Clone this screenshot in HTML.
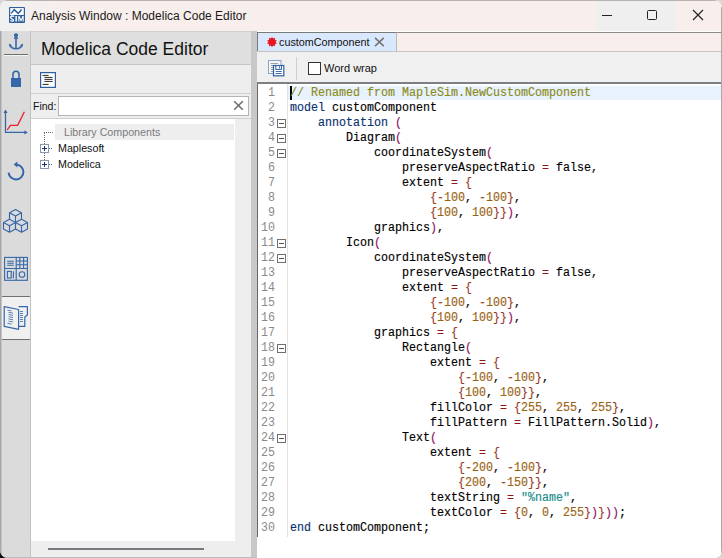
<!DOCTYPE html>
<html><head><meta charset="utf-8">
<style>
*{margin:0;padding:0;box-sizing:border-box}
html,body{width:722px;height:558px;overflow:hidden;background:#d8d8d8}
body{position:relative;font-family:"Liberation Sans",sans-serif;font-size:12px;color:#000}
.a{position:absolute}
#win{left:0;top:0;width:722px;height:558px;background:linear-gradient(90deg,#f0f0f0 0,#f8efed 70px);border-radius:7px 8px 8px 8px;overflow:hidden}
#title{left:31px;top:9px;font-size:12px;color:#1a1a1a;white-space:nowrap}
#strip{left:0;top:31px;width:31px;height:526px;background:linear-gradient(90deg,#a6a6a6 0,#a6a6a6 1px,#c4c4c4 1px,#c4c4c4 2px,#dbdbdb 2px);border-right:1px solid #c2c2c2}
#lp{left:31px;top:31px;width:220px;height:526px;background:#eeeeee}
#lphead{left:0;top:0;width:220px;height:34px;background:#dfdfdf;border-top:1px solid #d0d0d0;border-bottom:1px solid #c6c6c6}
#lphead span{position:absolute;left:10px;top:7px;font-size:17.5px;color:#111;white-space:nowrap}
#lptool{left:0;top:34px;width:220px;height:29px;background:#eeeeee;border-bottom:1px solid #cfcfcf}
#find{left:0;top:63px;width:220px;height:25px;background:#eeeeee;border-bottom:1px solid #cfcfcf}
#tree{left:0;top:88px;width:204px;height:422px;background:#fff}
#split{left:251px;top:31px;width:6px;height:526px;background:#c8c8c8}
#rp{left:257px;top:31px;width:464px;height:527px;background:#fff}
#tabstrip{left:0;top:0;width:464px;height:21px;background:#f8efed;border-top:1px solid #fff;border-bottom:1px solid #c4c4c4}
#tabtopline{left:0;top:1px;width:464px;height:1px;background:#8a8a8a}
#tab{left:0;top:1px;width:140px;height:19px;background:#d9e8fc;border:1px solid #7a7a7a;border-right-color:#b8b8b8;border-bottom:none}
#rtool{left:0;top:21px;width:464px;height:32px;background:#f0f0f0;border-bottom:2px solid #7c7f84}
#code{left:0;top:53px;width:464px;height:473px;background:#fff}
#lines{left:0;top:2px;width:464px;height:452px}
.ln{position:absolute;left:0;width:18px;text-align:right;font-family:"Liberation Mono",monospace;font-size:11.67px;line-height:15px;color:#8a8a8a;transform:scaleY(1.04);transform-origin:0 10px}
.cl{position:absolute;left:33px;font-family:"Liberation Mono",monospace;font-size:12.0px;line-height:15px;white-space:pre;color:#000;-webkit-text-stroke:0.15px currentColor;transform:scaleX(0.97191);transform-origin:0 10px}
.k{color:#08326e}
.c{color:#8b8a1a}
.p{color:#8e1262}
.b{color:#9a3a28}
.m{color:#a04828}
.e{color:#901818}
.n{color:#9a6414}
.s{color:#188a8a}
.fold{position:absolute;left:20px;width:9px;height:9px;border:1px solid #707070;background:#fff}
.fold:after{content:"";position:absolute;left:1px;top:3px;width:5px;height:1px;background:#505050}
.ic{position:absolute}
</style></head><body>
<div class="a" style="left:0;top:540px;width:14px;height:18px;background:#111"></div>
<div id="win" class="a">
  <div class="a" style="left:0;top:0;width:722px;height:1px;background:#b8b2b0"></div>
  <svg class="a" style="left:9px;top:7px" width="16" height="16" viewBox="0 0 16 16">
    <rect x="0" y="0" width="16" height="16" rx="1" fill="#2d5f9e"/>
    <rect x="1.2" y="1.1" width="13.6" height="6.9" fill="#fff"/>
    <polyline points="2.2,6.4 5.2,2.6 9.2,6.4 12.6,2.6" fill="none" stroke="#2d5f9e" stroke-width="1.5"/>
    <path d="M5 9.6 Q4.4 9 3.2 9 Q1.6 9 1.6 10.5 Q1.6 11.6 3.2 12 Q4.6 12.4 4.6 13.2 Q4.6 14.2 3.2 14.2 Q2 14.2 1.4 13.4" fill="none" stroke="#fff" stroke-width="1.3"/>
    <rect x="6.4" y="9" width="1.5" height="5.6" fill="#fff"/>
    <path d="M9.3 14.6 V9 H10.6 L12 12.6 L13.4 9 H14.7 V14.6 H13.6 V11 L12.4 14.2 H11.6 L10.4 11 V14.6Z" fill="#fff"/>
  </svg>
  <div id="title" class="a">Analysis Window : Modelica Code Editor</div>
  <div class="a" style="left:597px;top:1px;width:79px;height:30px;background:#efefef"></div>
  <div class="a" style="left:602px;top:15px;width:10px;height:1px;background:#222"></div>
  <div class="a" style="left:647px;top:10px;width:10px;height:10px;border:1px solid #222;border-radius:1.5px"></div>
  <svg class="a" style="left:692px;top:9px" width="12" height="12" viewBox="0 0 12 12"><path d="M1 1L11 11M11 1L1 11" stroke="#222" stroke-width="1.2"/></svg>

  <!-- left icon strip -->
  <div id="strip" class="a">
  </div>
  <div class="a" style="left:2px;top:296px;width:28px;height:44px;background:#f0f0f0;border-top:1px solid #707070;border-bottom:1px solid #707070"></div>
  <div class="a" style="left:4px;top:54px;width:24px;height:1px;background:#6e6e6e"></div>
  <div class="a" style="left:4px;top:55px;width:24px;height:1px;background:#f4f4f4"></div>
  <svg class="a" style="left:0;top:31px" width="31" height="310" viewBox="0 31 31 310">
    <!-- anchor -->
    <g fill="none" stroke="#3567a8" stroke-width="1.6">
      <circle cx="16" cy="35.3" r="1.3" fill="#3567a8"/>
      <line x1="16" y1="35" x2="16" y2="48.5"/>
      <line x1="14" y1="38.2" x2="18" y2="38.2"/>
      <path d="M9.6 44.6 Q11 48.8 16 48.8 Q21 48.8 22.4 44.6"/>
    </g>
    <path d="M8.8 43.4 L12 45.2 L9.8 46.8Z M23.2 43.4 L20 45.2 L22.2 46.8Z" fill="#3567a8"/>
    <!-- lock -->
    <path d="M13 78 V74.5 A3 3.2 0 0 1 19 74.5 V78" fill="none" stroke="#3567a8" stroke-width="1.6"/>
    <rect x="11" y="78" width="10" height="9" fill="#3567a8"/>
    <!-- chart -->
    <g fill="none" stroke="#3567a8" stroke-width="1.3">
      <path d="M5.5 111.5 V132.4 H26"/>
    </g>
    <path d="M5.5 109.6 L3.4 113 H7.6Z M27.8 132.4 L24.4 130.3 V134.5Z" fill="#3567a8"/>
    <path d="M7.2 130 L10.4 125.4 H17.6 L24.4 111.8" fill="none" stroke="#e8202a" stroke-width="1.3"/>
    <!-- refresh -->
    <path d="M8.6 172.6 A7.4 7.4 0 1 0 16.2 164.6" fill="none" stroke="#3567a8" stroke-width="2"/>
    <path d="M13.6 164.6 L17.4 161.6 L17.4 167.6Z" fill="#3567a8"/>
    <!-- cubes -->
    <g fill="none" stroke="#3567a8" stroke-width="1.15" stroke-linejoin="round">
      <path d="M15.5 209.5 L21.5 212.7 L15.5 215.9 L9.5 212.7Z M9.5 212.7 V219.3 M15.5 215.9 V222.5 M21.5 212.7 V219.3"/>
      <path d="M9.5 219.3 L15.5 222.5 L9.5 225.7 L3.5 222.5Z M3.5 222.5 V229.1 L9.5 232.3 L15.5 229.1 V222.5 M9.5 225.7 V232.3"/>
      <path d="M21.5 219.3 L27.5 222.5 L21.5 225.7 L15.5 222.5Z M15.5 229.1 L21.5 232.3 L27.5 229.1 V222.5 M21.5 225.7 V232.3"/>
    </g>
    <!-- panel -->
    <g fill="none" stroke="#3567a8" stroke-width="1.1">
      <rect x="4.6" y="257.4" width="22.8" height="22.9"/>
      <path d="M16.2 257.4 V280.3 M4.6 268.5 H27.4"/>
      <path d="M7.2 261.3 H13.8 M7.2 263.3 H13.8 M7.2 265.3 H13.8"/>
      <path d="M19.8 257.4 V268.5 M23.6 257.4 V268.5 M16.2 261 H27.4 M16.2 264.8 H27.4"/>
      <rect x="7.4" y="271.4" width="3.8" height="6.6"/>
      <path d="M13.4 271.2 V278.2"/>
      <circle cx="22" cy="274.5" r="2.8"/>
    </g>
    <!-- doc -->
    <g fill="none" stroke="#3567a8" stroke-width="1.2" stroke-linejoin="round">
      <path d="M18.5 306.6 H27.4 V315 L24.8 317 V326.4 H18.6"/>
      <path d="M4.2 306.6 L18.6 309.5 V329.3 L4.2 326.4Z"/>
    </g>
    <g stroke="#3567a8" stroke-width="0.8">
      <path d="M7.5 310 L11.5 311 M8.5 312.3 L13 313.2 M8.5 314.5 L13 315.4 M8.5 316.7 L13 317.6 M8.5 318.9 L13 319.8 M8.5 321.1 L13 322 M7.5 323.3 L11.5 324.2"/>
      <path d="M20 311.5 H23 M20 313.5 H23 M20 315.5 H23 M20 317.5 H23 M20 319.5 H23 M20 321.5 H23"/>
    </g>
  </svg>

  <div id="lp" class="a">
    <div id="lphead" class="a"><span>Modelica Code Editor</span></div>
    <div id="lptool" class="a"></div>
    <div id="find" class="a"></div>
    <div id="tree" class="a"></div>
  </div>
  <!-- left toolbar doc icon -->
  <svg class="a" style="left:40px;top:72px" width="16" height="16" viewBox="0 0 16 16">
    <rect x="0.6" y="0.6" width="14.8" height="14.8" fill="#fff" stroke="#2d5f9e" stroke-width="1.2"/>
    <path d="M2.6 3.4 H8.6 M4.4 5.4 H12.6 M4.4 7.4 H12.6 M4.4 9.4 H12.6 M2.6 12.4 H8.6" stroke="#111" stroke-width="0.9"/>
  </svg>
  <!-- find row -->
  <div class="a" style="left:33px;top:100px;font-size:10.5px;color:#111">Find:</div>
  <div class="a" style="left:58px;top:96px;width:191px;height:20px;background:#fff;border:1px solid #b4b4b4"></div>
  <svg class="a" style="left:233px;top:100px" width="11" height="11" viewBox="0 0 11 11"><path d="M1.2 1.2L9.8 9.8M9.8 1.2L1.2 9.8" stroke="#707070" stroke-width="1.6"/></svg>
  <!-- tree -->
  <div class="a" style="left:55px;top:124px;width:179px;height:16px;background:#eeeeee"></div>
  <div class="a" style="left:64px;top:126px;font-size:10.7px;color:#7a7a7a;white-space:nowrap">Library Components</div>
  <svg class="a" style="left:38px;top:128px" width="20" height="44" viewBox="38 128 20 44" shape-rendering="crispEdges">
    <path d="M44 132.5 H53 M44.5 133 V144 M44.5 153 V160 M49 148.5 H53 M49 164.5 H53" stroke="#6a6a6a" stroke-width="1" stroke-dasharray="1 1"/>
    <rect x="40.5" y="144.5" width="8" height="8" fill="#fff" stroke="#8a98ac"/>
    <rect x="40.5" y="160.5" width="8" height="8" fill="#fff" stroke="#8a98ac"/>
    <path d="M42 148.5 H47 M44.5 146 V151 M42 164.5 H47 M44.5 162 V167" stroke="#1a3070" stroke-width="1"/>
  </svg>
  <div class="a" style="left:58px;top:142px;font-size:10.7px;color:#111;white-space:nowrap">Maplesoft</div>
  <div class="a" style="left:58px;top:158px;font-size:10.7px;color:#111;white-space:nowrap">Modelica</div>
  <!-- bottom h scrollbar thumb -->
  <div class="a" style="left:48px;top:548px;width:156px;height:2px;background:#76797e"></div>

  <div id="split" class="a"></div>
  <div class="a" style="left:0;top:557px;width:257px;height:1px;background:#bcbcbc"></div>
  <div id="rp" class="a">
    <div id="tabstrip" class="a"></div>
    <div id="tabtopline" class="a"></div>
    <div id="tab" class="a"></div>
    <div id="rtool" class="a"></div>
    <div id="code" class="a">
      <div class="a" style="left:0;top:0;width:1px;height:453px;background:#6a6a6a"></div>
      <div class="a" style="left:30px;top:0;width:1px;height:453px;background:#e2e2e2"></div>
      <div class="a" style="left:31px;top:2px;width:433px;height:14px;background:#e8f2fd"></div>
      <div class="a" style="left:33px;top:2px;width:2px;height:14px;background:#000"></div>
      <div id="lines" class="a">
<div class="ln" style="top:0px">1</div>
<div class="cl" style="top:0px"><span class="c">// Renamed from MapleSim.NewCustomComponent</span></div>
<div class="ln" style="top:15px">2</div>
<div class="cl" style="top:15px"><span class="k">model</span> customComponent</div>
<div class="ln" style="top:30px">3</div>
<div class="fold" style="top:33px"></div>
<div class="cl" style="top:30px">    <span class="k">annotation</span> <span class="p">(</span></div>
<div class="ln" style="top:45px">4</div>
<div class="fold" style="top:48px"></div>
<div class="cl" style="top:45px">        Diagram<span class="p">(</span></div>
<div class="ln" style="top:60px">5</div>
<div class="fold" style="top:63px"></div>
<div class="cl" style="top:60px">            coordinateSystem<span class="p">(</span></div>
<div class="ln" style="top:75px">6</div>
<div class="cl" style="top:75px">                preserveAspectRatio <span class="e">=</span> false,</div>
<div class="ln" style="top:90px">7</div>
<div class="cl" style="top:90px">                extent <span class="e">=</span> <span class="b">{</span></div>
<div class="ln" style="top:105px">8</div>
<div class="cl" style="top:105px">                    <span class="b">{</span><span class="m">-</span><span class="n">100</span>, <span class="m">-</span><span class="n">100</span><span class="b">}</span>,</div>
<div class="ln" style="top:120px">9</div>
<div class="cl" style="top:120px">                    <span class="b">{</span><span class="n">100</span>, <span class="n">100</span><span class="b">}</span><span class="b">}</span><span class="p">)</span>,</div>
<div class="ln" style="top:135px">10</div>
<div class="cl" style="top:135px">            graphics<span class="p">)</span>,</div>
<div class="ln" style="top:150px">11</div>
<div class="fold" style="top:153px"></div>
<div class="cl" style="top:150px">        Icon<span class="p">(</span></div>
<div class="ln" style="top:165px">12</div>
<div class="fold" style="top:168px"></div>
<div class="cl" style="top:165px">            coordinateSystem<span class="p">(</span></div>
<div class="ln" style="top:180px">13</div>
<div class="cl" style="top:180px">                preserveAspectRatio <span class="e">=</span> false,</div>
<div class="ln" style="top:195px">14</div>
<div class="cl" style="top:195px">                extent <span class="e">=</span> <span class="b">{</span></div>
<div class="ln" style="top:210px">15</div>
<div class="cl" style="top:210px">                    <span class="b">{</span><span class="m">-</span><span class="n">100</span>, <span class="m">-</span><span class="n">100</span><span class="b">}</span>,</div>
<div class="ln" style="top:225px">16</div>
<div class="cl" style="top:225px">                    <span class="b">{</span><span class="n">100</span>, <span class="n">100</span><span class="b">}</span><span class="b">}</span><span class="p">)</span>,</div>
<div class="ln" style="top:240px">17</div>
<div class="cl" style="top:240px">            graphics <span class="e">=</span> <span class="b">{</span></div>
<div class="ln" style="top:255px">18</div>
<div class="fold" style="top:258px"></div>
<div class="cl" style="top:255px">                Rectangle<span class="p">(</span></div>
<div class="ln" style="top:270px">19</div>
<div class="cl" style="top:270px">                    extent <span class="e">=</span> <span class="b">{</span></div>
<div class="ln" style="top:285px">20</div>
<div class="cl" style="top:285px">                        <span class="b">{</span><span class="m">-</span><span class="n">100</span>, <span class="m">-</span><span class="n">100</span><span class="b">}</span>,</div>
<div class="ln" style="top:300px">21</div>
<div class="cl" style="top:300px">                        <span class="b">{</span><span class="n">100</span>, <span class="n">100</span><span class="b">}</span><span class="b">}</span>,</div>
<div class="ln" style="top:315px">22</div>
<div class="cl" style="top:315px">                    fillColor <span class="e">=</span> <span class="b">{</span><span class="n">255</span>, <span class="n">255</span>, <span class="n">255</span><span class="b">}</span>,</div>
<div class="ln" style="top:330px">23</div>
<div class="cl" style="top:330px">                    fillPattern <span class="e">=</span> FillPattern.Solid<span class="p">)</span>,</div>
<div class="ln" style="top:345px">24</div>
<div class="fold" style="top:348px"></div>
<div class="cl" style="top:345px">                Text<span class="p">(</span></div>
<div class="ln" style="top:360px">25</div>
<div class="cl" style="top:360px">                    extent <span class="e">=</span> <span class="b">{</span></div>
<div class="ln" style="top:375px">26</div>
<div class="cl" style="top:375px">                        <span class="b">{</span><span class="m">-</span><span class="n">200</span>, <span class="m">-</span><span class="n">100</span><span class="b">}</span>,</div>
<div class="ln" style="top:390px">27</div>
<div class="cl" style="top:390px">                        <span class="b">{</span><span class="n">200</span>, <span class="m">-</span><span class="n">150</span><span class="b">}</span><span class="b">}</span>,</div>
<div class="ln" style="top:405px">28</div>
<div class="cl" style="top:405px">                    textString <span class="e">=</span> <span class="s">&quot;%name&quot;</span>,</div>
<div class="ln" style="top:420px">29</div>
<div class="cl" style="top:420px">                    textColor <span class="e">=</span> <span class="b">{</span><span class="n">0</span>, <span class="n">0</span>, <span class="n">255</span><span class="b">}</span><span class="p">)</span><span class="b">}</span><span class="p">)</span><span class="p">)</span>;</div>
<div class="ln" style="top:435px">30</div>
<div class="cl" style="top:435px"><span class="k">end</span> customComponent;</div>
      </div>
    </div>
  </div>
  <!-- tab content -->
  <svg class="a" style="left:266px;top:36px" width="12" height="12" viewBox="0 0 12 12">
    <path id="star" fill="#e8141e" d="M6.00,0.80 L7.11,2.58 L9.06,1.79 L8.91,3.88 L10.95,4.39 L9.60,6.00 L10.95,7.61 L8.91,8.12 L9.06,10.21 L7.11,9.42 L6.00,11.20 L4.89,9.42 L2.94,10.21 L3.09,8.12 L1.05,7.61 L2.40,6.00 L1.05,4.39 L3.09,3.88 L2.94,1.79 L4.89,2.58Z"/>
  </svg>
  <div class="a" style="left:279px;top:36px;font-size:10.8px;color:#111;white-space:nowrap">customComponent</div>
  <svg class="a" style="left:374px;top:37px" width="11" height="10" viewBox="0 0 11 10"><path d="M1 0.8L9.8 9.2M9.8 0.8L1 9.2" stroke="#777" stroke-width="1.6"/></svg>
  <!-- right toolbar -->
  <svg class="a" style="left:267px;top:59px" width="18" height="18" viewBox="0 0 18 18">
    <rect x="1.5" y="1.5" width="12.5" height="13" fill="#f6f6f6" stroke="#86a4cc" stroke-width="1"/>
    <path d="M3.5 4.5 H11 M4 6.5 H6 M4 8.5 H6 M4 10.5 H6 M4 12.5 H6" stroke="#8a8a8a" stroke-width="0.8"/>
    <rect x="6.5" y="6.5" width="10.3" height="10.3" fill="#fff" stroke="#2d5f9e" stroke-width="1.2"/>
    <rect x="8.8" y="6.6" width="5.6" height="3.8" fill="#fff" stroke="#2d5f9e" stroke-width="1"/>
    <rect x="11.9" y="7.4" width="1" height="2" fill="#2d5f9e"/>
    <path d="M8.6 12.5 H14.8 M8.6 14.5 H14.8" stroke="#2d5f9e" stroke-width="0.9"/>
  </svg>
  <div class="a" style="left:296px;top:57px;width:1px;height:23px;background:#cfcfcf"></div>
  <div class="a" style="left:308px;top:62px;width:13px;height:13px;background:#fff;border:1px solid #333"></div>
  <div class="a" style="left:324px;top:62px;font-size:11px;color:#111;white-space:nowrap">Word wrap</div>
  <div class="a" style="left:721px;top:7px;width:1px;height:548px;background:#a8a8a8"></div>
</div>
</body></html>
